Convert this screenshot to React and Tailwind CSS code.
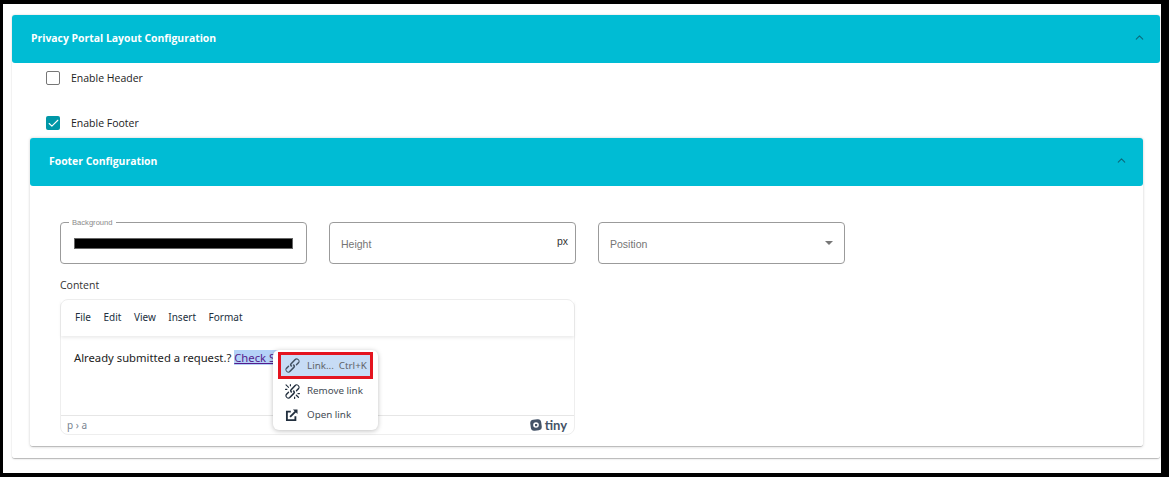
import React from "react";
import { ChevronUp, Check } from "lucide-react";

const LinkIcon = () => (
  <svg width="19" height="19" viewBox="0 0 24 24" fill="#222f3e" className="opacity-80">
    <path d="M6.2 12.3a1 1 0 0 1 1.4 1.4l-2 2a2 2 0 1 0 2.6 2.8l4.8-4.8a1 1 0 0 0 0-1.4 1 1 0 1 1 1.4-1.3 2.9 2.9 0 0 1 0 4L9.6 20a3.9 3.9 0 0 1-5.5-5.5l2-2zm11.6-.6a1 1 0 0 1-1.4-1.4l2.1-2a2 2 0 1 0-2.7-2.8L11 10.3a1 1 0 0 0 0 1.4A1 1 0 1 1 9.6 13a2.9 2.9 0 0 1 0-4L14.4 4a3.9 3.9 0 0 1 5.5 5.5l-2 2z" />
  </svg>
);
const UnlinkIcon = () => (
  <svg width="19" height="19" viewBox="0 0 24 24" fill="#222f3e">
    <path d="M6.2 12.3a1 1 0 0 1 1.4 1.4l-2.1 2a2 2 0 1 0 2.7 2.8l4.8-4.8a1 1 0 0 0 0-1.4 1 1 0 1 1 1.4-1.3 2.9 2.9 0 0 1 0 4L9.6 20a3.9 3.9 0 0 1-5.5-5.5l2-2zm11.6-.6a1 1 0 0 1-1.4-1.4l2-2a2 2 0 1 0-2.6-2.8L11 10.3a1 1 0 0 0 0 1.4A1 1 0 1 1 9.6 13a2.9 2.9 0 0 1 0-4L14.4 4a3.9 3.9 0 0 1 5.5 5.5l-2 2zM7.6 6.3a.8.8 0 0 1-1 1.1L3.3 4.2a.7.7 0 1 1 1-1l3.2 3.1zM5.1 8.6a.8.8 0 0 1 0 1.5H3a.8.8 0 0 1 0-1.5H5zm5-3.5a.8.8 0 0 1-1.5 0V3a.8.8 0 0 1 1.5 0v2zm6 11.8a.8.8 0 0 1 1-1l3.2 3.2a.8.8 0 0 1-1 1L16 17zm-2.2 2a.8.8 0 0 1 1.5 0V21a.8.8 0 0 1-1.5 0V19zm5-3.5a.7.7 0 1 1 0-1.5H21a.8.8 0 0 1 0 1.5h-2.1z" />
  </svg>
);
const OpenIcon = () => (
  <svg width="17" height="17" viewBox="0 0 24 24" fill="none" stroke="#222f3e" strokeWidth="2.6">
    <path d="M11 6.500H5.500v12h12V13" />
    <path d="M10 14 19 5" />
    <path d="M14 3.500h6.500V10" fill="#222f3e" stroke="none" />
  </svg>
);
const TinyLogo = () => (
  <svg width="12" height="12" viewBox="0 0 12 12" fill="none">
    <rect x="0.500" y="0.500" width="11" height="11" rx="3.500" transform="rotate(-8 6 6)" fill="#455468" />
    <circle cx="6" cy="6" r="2.800" fill="#fff" />
    <rect x="5" y="5" width="2.200" height="2.200" fill="#455468" />
  </svg>
);

function Header({ title, pad }) {
  return (
    <div className={`flex h-12 items-center justify-between rounded-[3px] bg-[#00bcd4] ${pad}`}>
      <span className="text-[10.4px] font-bold text-white">{title}</span>
      <ChevronUp size={13} strokeWidth={2} className="-mt-[4px] text-[#0a6a7c]" />
    </div>
  );
}

function Field({ className = "", children }) {
  return (
    <div className={`relative flex h-[42px] w-[247px] items-center rounded-[4px] border border-[#9b9b9b] ${className}`}>
      {children}
    </div>
  );
}

function MenuItem({ icon, label, shortcut, active }) {
  return (
    <div className={`flex items-center ${active ? "mx-[5px] h-[27px] border-[3px] border-[#e4141f] bg-[#c7dcf5] pl-[2px]" : "mx-[5px] h-6 pl-[5px]"}`}>
      <span className="flex w-[23px] items-center">{icon}</span>
      <span className={`ml-[1px] ${active ? "mt-[1px] text-[#5f6368]" : "text-[#444b54]"}`}>{label}</span>
      {shortcut && <span className="ml-[5px] mt-[1px] text-[#5f6368]">{shortcut}</span>}
    </div>
  );
}

export default function App() {
  return (
    <div className="h-[477px] w-[1169px] overflow-hidden bg-black pb-1 pl-[3px] pr-2 pt-1 font-['Open_Sans',sans-serif] text-[10.5px] text-[#222]">
      <div className="h-full bg-white pl-[9px] pr-px pt-[11px]">
        <div className="h-[444px] rounded-[3px] border-b border-[#bdbdbd] shadow-[0_0_2px_rgba(0,0,0,0.2)]">
          <Header title="Privacy Portal Layout Configuration" pad="pl-[19px] pr-[14px]" />

          <label className="ml-[34px] mt-2 flex h-[14px] items-center">
            <span className="h-[14px] w-[14px] rounded-[2px] border border-[#767676] bg-white" />
            <span className="ml-[11px] mt-[1px]">Enable Header</span>
          </label>
          <label className="ml-[34px] mt-[31px] flex h-[14px] items-center">
            <span className="flex h-[14px] w-[14px] items-center justify-center rounded-[2px] bg-[#0097a7]">
              <Check size={13} strokeWidth={2} className="text-white" />
            </span>
            <span className="ml-[11px] mt-[1px]">Enable Footer</span>
          </label>

          <div className="ml-[18px] mr-[17px] mt-2 h-[309px] rounded-[3px] border-b border-[#bdbdbd] shadow-[0_0_3px_rgba(0,0,0,0.2)]">
            <Header title="Footer Configuration" pad="pl-[19px] pr-[15px]" />

            <div className="pl-[30px] pt-9">
              <div className="flex gap-[22px] font-['Liberation_Sans',sans-serif] text-[10.5px] text-[#757575]">
                <Field className="pl-[13px]">
                  <span className="absolute -top-[5px] left-[8px] bg-white px-[3px] text-[7.6px] leading-[9px] text-[#8a8a8a]">Background</span>
                  <span className="h-[11px] w-[219px] border border-[#666] bg-black" />
                </Field>
                <Field className="justify-between pl-[11px] pr-[7px]">
                  <span className="mt-[3px]">Height</span>
                  <span className="-mt-[2px] text-[#333]">px</span>
                </Field>
                <Field className="justify-between pl-[11px] pr-[11px]">
                  <span className="mt-[3px]">Position</span>
                  <span className="-mt-[1px] h-0 w-0 border-x-[4px] border-t-[4px] border-x-transparent border-t-[#777]" />
                </Field>
              </div>

              <div className="mt-[14px] font-['Open_Sans',sans-serif] leading-[15px] text-[#333]">Content</div>

              <div className="relative mt-[6px] flex h-[136px] w-[515px] flex-col rounded-[8px] border border-[#eeeeee] font-['Noto_Sans',sans-serif]">
                <div className="flex h-[36px] items-center gap-[12.5px] pb-[1px] pl-[14px] text-[10px] text-[#222f3e] shadow-[0_2px_3px_rgba(0,0,0,0.08)]">
                  <span>File</span>
                  <span>Edit</span>
                  <span>View</span>
                  <span>Insert</span>
                  <span>Format</span>
                </div>
                <div className="flex-1 pl-[13px] pt-[14px] text-[11.25px] leading-[16px] text-[#222]">
                  Already submitted a request.?{" "}
                  <span className="bg-[#b4d2f7] text-[#551a8b] underline">Check Status</span>
                </div>
                <div className="flex h-[19px] items-center justify-between border-t border-[#e6e6e6] pl-[6px] pr-[7px] text-[10px] text-[#7a8491]">
                  <span>p › a</span>
                  <span className="flex items-center gap-[3px] font-['Lato',sans-serif] text-[13px] font-bold leading-none text-[#455468]">
                    <TinyLogo />
                    tiny
                  </span>
                </div>

                <div className="absolute left-[212px] top-[50px] w-[105px] rounded-[6px] bg-white pb-[3px] pt-[2px] text-[9.8px] shadow-[0_1px_5px_rgba(0,0,0,0.25)]">
                  <MenuItem icon={<LinkIcon />} label="Link..." shortcut="Ctrl+K" active />
                  <MenuItem icon={<UnlinkIcon />} label="Remove link" />
                  <MenuItem icon={<OpenIcon />} label="Open link" />
                </div>
              </div>
            </div>
          </div>
        </div>
      </div>
    </div>
  );
}
